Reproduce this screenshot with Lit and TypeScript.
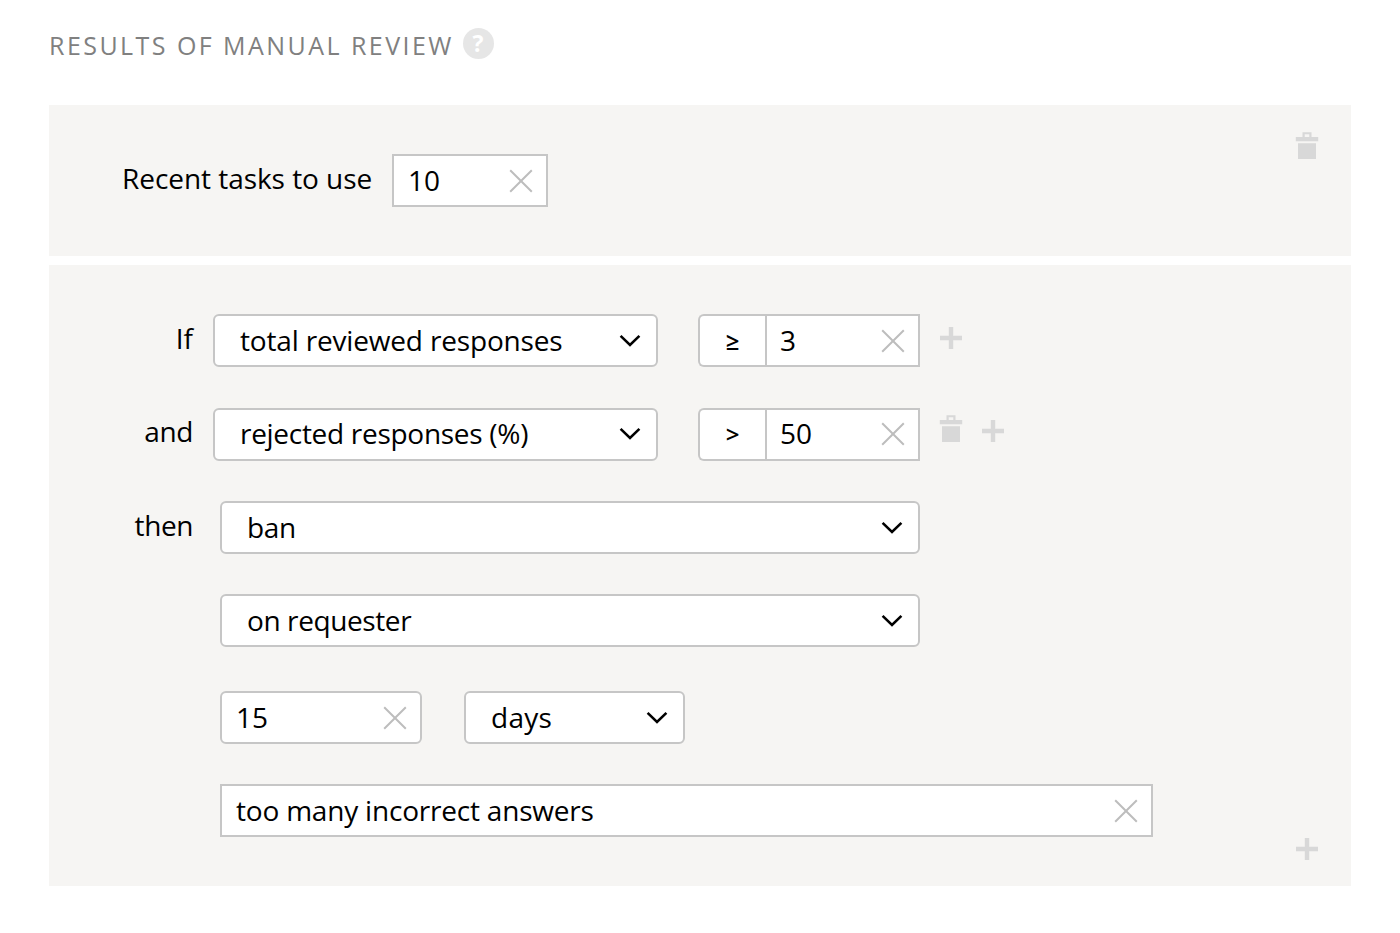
import { LitElement, html, css, svg } from "lit";
import { customElement } from "lit/decorators.js";

const cross = html`<svg class="cross" width="24" height="24" viewBox="0 0 24 24">
  <path d="M1.200 1.200 22.800 22.800M22.800 1.200 1.200 22.800" fill="none" stroke="#bdbdbd" stroke-width="2" />
</svg>`;

const chevron = html`<svg class="chevron" width="22" height="14" viewBox="0 0 22 14">
  <path d="M1.600 1.900 11 10.900 20.400 1.900" fill="none" stroke="#000" stroke-width="2.600" />
</svg>`;

const plus = html`<svg class="icon" width="24" height="24" viewBox="0 0 24 24">
  <path d="M9.800 1h4.400v8.800H23v4.400h-8.800V23H9.800v-8.800H1V9.800h8.800z" fill="#d8d8d8" />
</svg>`;

const trashShape = svg`<path
  d="M.8 5H7.500V.3h9V5H23.200V9.300H.8zM9.700 2.300V5h4.600V2.300zM3 11.200H21V27H3z"
  fill="#d8d8d8" fill-rule="evenodd" />`;
const trash = html`<svg class="icon" width="24" height="28" viewBox="0 0 24 28">${trashShape}</svg>`;

@customElement("app-root")
export class AppRoot extends LitElement {
  static styles = css`
    :host {
      display: block;
      box-sizing: border-box;
      height: 933px;
      padding: 28px 49px 0;
      background: #fff;
      color: #000;
      font: 28px/36px "Open Sans", "Noto Sans", sans-serif;
      white-space: nowrap;
    }
    * {
      box-sizing: border-box;
    }
    svg {
      display: block;
      flex: none;
    }
    .title {
      display: flex;
      height: 77px;
      font-size: 25px;
      line-height: 35px;
      color: #808080;
    }
    .title-text {
      width: 413.500px;
      letter-spacing: 2.450px;
    }
    .help {
      width: 31px;
      height: 31px;
      border-radius: 50%;
      background: #e6e6e6;
      color: #fff;
      font: 700 23px/31px "Open Sans", sans-serif;
      text-align: center;
    }
    .panel {
      display: flex;
      justify-content: space-between;
      background: #f6f5f3;
    }
    .recent {
      height: 151px;
      margin-bottom: 9px;
      padding: 49px 32.500px 0 73px;
    }
    .recent .corner {
      margin-top: -22px;
    }
    .rule {
      height: 621px;
      padding: 49px 32.500px 25px 0;
    }
    .rule .corner {
      align-self: flex-end;
    }
    .row {
      display: flex;
      height: 53px;
      margin-bottom: 41px;
    }
    .row.tight {
      margin-bottom: 40px;
    }
    .row.gap {
      margin-bottom: 44px;
    }
    .caption {
      height: 49px;
      line-height: 49px;
    }
    .raised .caption {
      line-height: 47px;
    }
    .raised .field {
      padding-bottom: 2px;
      line-height: 47px;
    }
    .recent .caption {
      width: 270px;
    }
    .rule .caption {
      width: 144px;
      margin-right: 20px;
      text-align: right;
    }
    .rule .caption.wide {
      margin-right: 27px;
    }
    .field {
      display: flex;
      align-items: center;
      justify-content: space-between;
      height: 53px;
      border: 2px solid #c6c6c6;
      background: #fff;
      line-height: 49px;
    }
    .round {
      border-radius: 6px;
    }
    .select {
      padding: 0 15px 0 25px;
    }
    .input {
      padding: 0 13px 0 14px;
    }
    .w-recent {
      width: 156px;
    }
    .w-cond {
      width: 445px;
      margin-right: 40px;
    }
    .op {
      width: 67px;
      border-right: 0;
      border-radius: 6px 0 0 6px;
      justify-content: center;
      font-size: 24px;
      font-weight: 600;
    }
    .w-value {
      width: 155px;
      margin-right: 19px;
      padding-left: 13px;
    }
    .w-action {
      width: 700px;
    }
    .w-count {
      width: 202px;
      margin-right: 42px;
    }
    .w-unit {
      width: 221px;
    }
    .w-reason {
      width: 933px;
    }
    .tools {
      display: flex;
      align-items: flex-end;
      gap: 18px;
      height: 36px;
    }
    .raised .tools {
      height: 35px;
    }
    .t-recent {
      letter-spacing: -0.050px;
    }
    .t-total {
      letter-spacing: -0.170px;
    }
    .t-rejected {
      letter-spacing: -0.290px;
    }
    .t-short {
      letter-spacing: -0.400px;
    }
    .t-days {
      letter-spacing: 0.300px;
    }
    .t-reason {
      letter-spacing: -0.200px;
    }
  `;

  render() {
    return html`
      <div class="title">
        <span class="title-text">RESULTS OF MANUAL REVIEW</span>
        <span class="help">?</span>
      </div>
      <section class="panel recent">
        <div class="row">
          <span class="caption"><span class="t-recent">Recent tasks to use</span></span>
          <div class="field input w-recent"><span>10</span>${cross}</div>
        </div>
        <div class="corner">${trash}</div>
      </section>
      <section class="panel rule">
        <div>
          <div class="row">
            <span class="caption">If</span>
            <div class="field round select w-cond"><span class="t-total">total reviewed responses</span>${chevron}</div>
            <div class="field op">≥</div>
            <div class="field input w-value"><span>3</span>${cross}</div>
            <div class="tools">${plus}</div>
          </div>
          <div class="row tight raised">
            <span class="caption"><span class="t-short">and</span></span>
            <div class="field round select w-cond"><span class="t-rejected">rejected responses (%)</span>${chevron}</div>
            <div class="field op">&gt;</div>
            <div class="field input w-value"><span>50</span>${cross}</div>
            <div class="tools">${trash}${plus}</div>
          </div>
          <div class="row tight">
            <span class="caption wide"><span class="t-short">then</span></span>
            <div class="field round select w-action"><span class="t-short">ban</span>${chevron}</div>
          </div>
          <div class="row gap">
            <span class="caption wide"></span>
            <div class="field round select w-action"><span class="t-short">on requester</span>${chevron}</div>
          </div>
          <div class="row tight">
            <span class="caption wide"></span>
            <div class="field round input w-count"><span>15</span>${cross}</div>
            <div class="field round select w-unit"><span class="t-days">days</span>${chevron}</div>
          </div>
          <div class="row">
            <span class="caption wide"></span>
            <div class="field input w-reason"><span class="t-reason">too many incorrect answers</span>${cross}</div>
          </div>
        </div>
        <div class="corner">${plus}</div>
      </section>
    `;
  }
}
